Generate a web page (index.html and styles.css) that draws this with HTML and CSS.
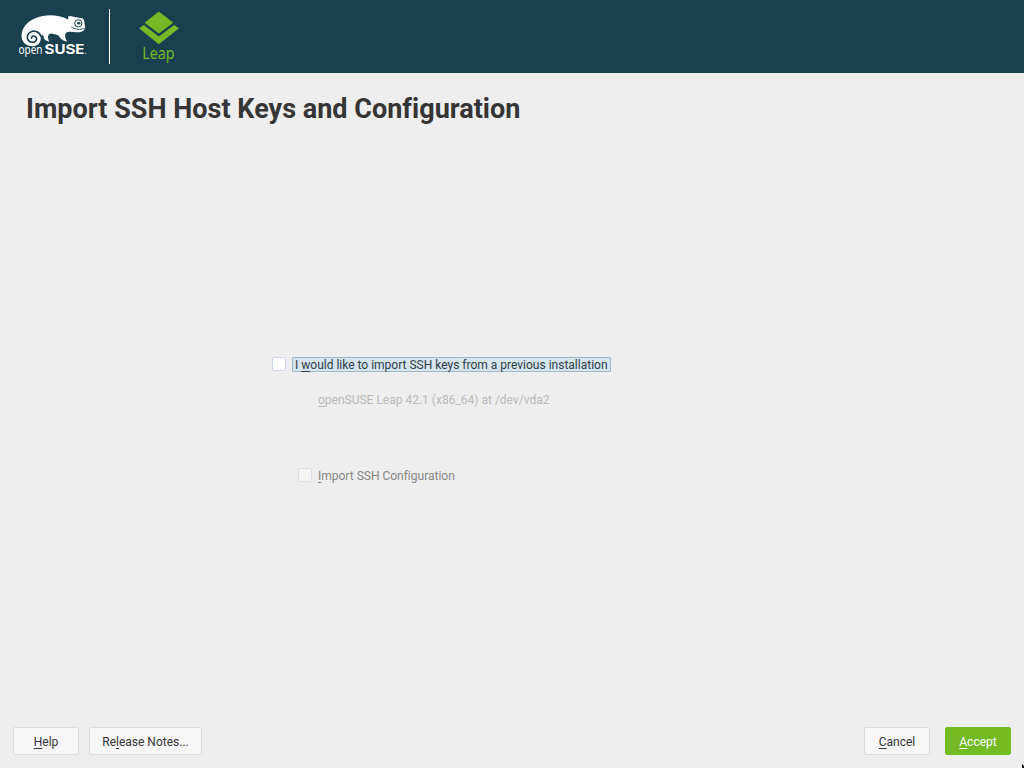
FILE: index.html
```html
<!DOCTYPE html>
<html lang="en">
<head>
<meta charset="utf-8">
<title>Import SSH Host Keys and Configuration</title>
<link rel="stylesheet" href="styles.css">
</head>
<body>
<div class="installer">
  <header class="banner">
    <svg class="suse-logo" viewBox="10 5 90 60" aria-label="openSUSE">
      <path class="lizard" d="M32.500 46.200C25 46.200 21.400 41 21.500 35.500C22 27 28 21 36 18C45 14.500 57 14 67 19L68.500 19.500C67.500 17.500 68 16 70 16L76 17.300C80 18 83.500 18 84 20L85.200 27.500C85 31 81 32.500 77 32.200C72 31.800 67 31 65.500 33.500C64.500 36 65.500 39 67.300 41.700C62.500 41 60.500 38.500 58.500 35.500C56 34.500 53 33.500 50.500 33.500C47.500 34.500 47.500 38 49.300 41.700C45 41 43.500 38.500 43.300 35C42 35 41.200 35.500 40.600 36.500C41.500 43 37.500 46.200 32.500 46.200Z"/>
      <path class="coil" d="M41 36.500C39.500 31.500 33.500 29.600 29.700 32.600C25.800 35.700 27 42 32.200 42.300C36.800 42.600 38 37.300 34.600 36.200C32.500 35.600 31 37 31.700 38.800"/>
      <circle class="eye" cx="78.300" cy="23.300" r="3.600"/>
      <ellipse class="pupil" cx="78.800" cy="23.300" rx="1.600" ry="1.200"/>
      <path class="mouth" d="M84.800 28C80.500 30.200 75 29.500 71.200 26.800"/>
      <text class="word-open" x="18.500" y="54.300" textLength="24" lengthAdjust="spacingAndGlyphs">open</text>
      <text class="word-suse" x="44.500" y="54.300" textLength="40" lengthAdjust="spacingAndGlyphs">SUSE</text>
      <circle class="dot" cx="85.800" cy="53.300" r=".6"/>
    </svg>
    <div class="divider"></div>
    <svg class="leap-logo" viewBox="134 8 50 57" aria-label="Leap">
      <path class="leap-mark" d="M158.800 11.500L173.300 22.700L158.800 33.600L144.600 22.700ZM139.100 28.300L143.800 25.100L158.800 36.500L174.200 25.100L179 28.300L158.800 44.200Z"/>
      <text class="word-leap" x="142.200" y="59" textLength="32.500" lengthAdjust="spacingAndGlyphs">Leap</text>
    </svg>
  </header>
  <h1 class="title">Import SSH Host Keys and Configuration</h1>
  <main class="content">
    <label class="option"><span class="box"></span><span class="focused">I <u>w</u>ould like to import SSH keys from a previous installation</span></label>
    <div class="system"><u>o</u>penSUSE Leap 42.1 (x86_64) at /dev/vda2</div>
    <label class="option disabled"><span class="box"></span><span><u>I</u>mport SSH Configuration</span></label>
  </main>
  <footer class="actions">
    <button class="button"><span><u>H</u>elp</span></button>
    <button class="button notes"><span>Re<u>l</u>ease Notes...</span></button>
    <button class="button cancel"><span><u>C</u>ancel</span></button>
    <button class="button accept"><span><u>A</u>ccept</span></button>
  </footer>
  <svg class="pointer" viewBox="0 0 2 4"><path d="M0 0L2 2V4H0Z"/></svg>
</div>
</body>
</html>
```
FILE: styles.css
```css
* { box-sizing: border-box; }
body { margin: 0; font: 12px/14px Roboto, "Liberation Sans", sans-serif; color: #353535; font-variant-ligatures: none; }
.installer { position: relative; width: 1024px; height: 768px; display: flex; flex-direction: column; background: #eeeeee; overflow: hidden; }
.banner { height: 73px; flex: none; display: flex; background: #1a4050; }
.suse-logo { width: 90px; height: 60px; margin: 5px 0 0 10px; }
.lizard, .dot { fill: #fff; }
.coil { fill: none; stroke: #1a4050; stroke-width: 1.6; }
.eye { fill: #fff; stroke: #1a4050; stroke-width: 1; }
.pupil { fill: #1a4050; }
.mouth { fill: none; stroke: #1a4050; stroke-width: .9; }
.word-open { font: 12px "Noto Sans", sans-serif; fill: #fff; }
.word-suse { font: 700 13px Inter, sans-serif; fill: #fff; }
.divider { width: 1px; height: 55px; margin: 9px 0 0 9px; background: #fff; }
.leap-logo { width: 50px; height: 57px; margin: 8px 0 0 24px; }
.leap-mark, .word-leap { fill: #73ba25; }
.word-leap { font: 16px "Noto Sans", sans-serif; }
.title { margin: 0; padding: 19px 0 0 26px; background: linear-gradient(#efebe7, #eeeeee) top / 100% 6px no-repeat; font-size: 27px; line-height: 34px; font-weight: 700; letter-spacing: .01px; color: #353535; }
.content { flex: 1; padding: 231px 0 0 272px; }
.option { display: flex; align-items: center; height: 15px; }
.box { width: 14px; height: 14px; margin: -1px 6px 0 0; border: 1px solid #ccd6e8; border-radius: 2px; background: #fff; }
.focused { width: 319px; height: 15px; padding: 0 2px; line-height: 14px; border: 1px solid #9db9c8; border-radius: 1px; background: #d8e4eb; color: #2d3f49; white-space: nowrap; }
.system { margin: 21px 0 0 46px; color: #b9b9b9; }
.disabled { margin: 61px 0 0 26px; color: #858585; }
.disabled .box { border-color: #dcdce8; background: #f5f5f5; }
u { text-decoration: underline 1px; text-underline-offset: 2px; text-decoration-skip-ink: none; }
.actions { display: flex; height: 41px; padding: 0 13px; }
.button { width: 66px; height: 28px; padding: 1px 0 0; font: inherit; font-variant-ligatures: none; color: #353535; border: 1px solid #dcdcdc; border-radius: 2px; background: #f6f6f6; }
.notes { width: 113px; margin-left: 10px; }
.cancel { margin-left: auto; }
.accept { margin-left: 15px; color: #fff; background: #73ba25; border-color: #73ba25; }
.pointer { position: absolute; right: 0; bottom: 0; width: 2px; height: 4px; fill: #000; }
```
